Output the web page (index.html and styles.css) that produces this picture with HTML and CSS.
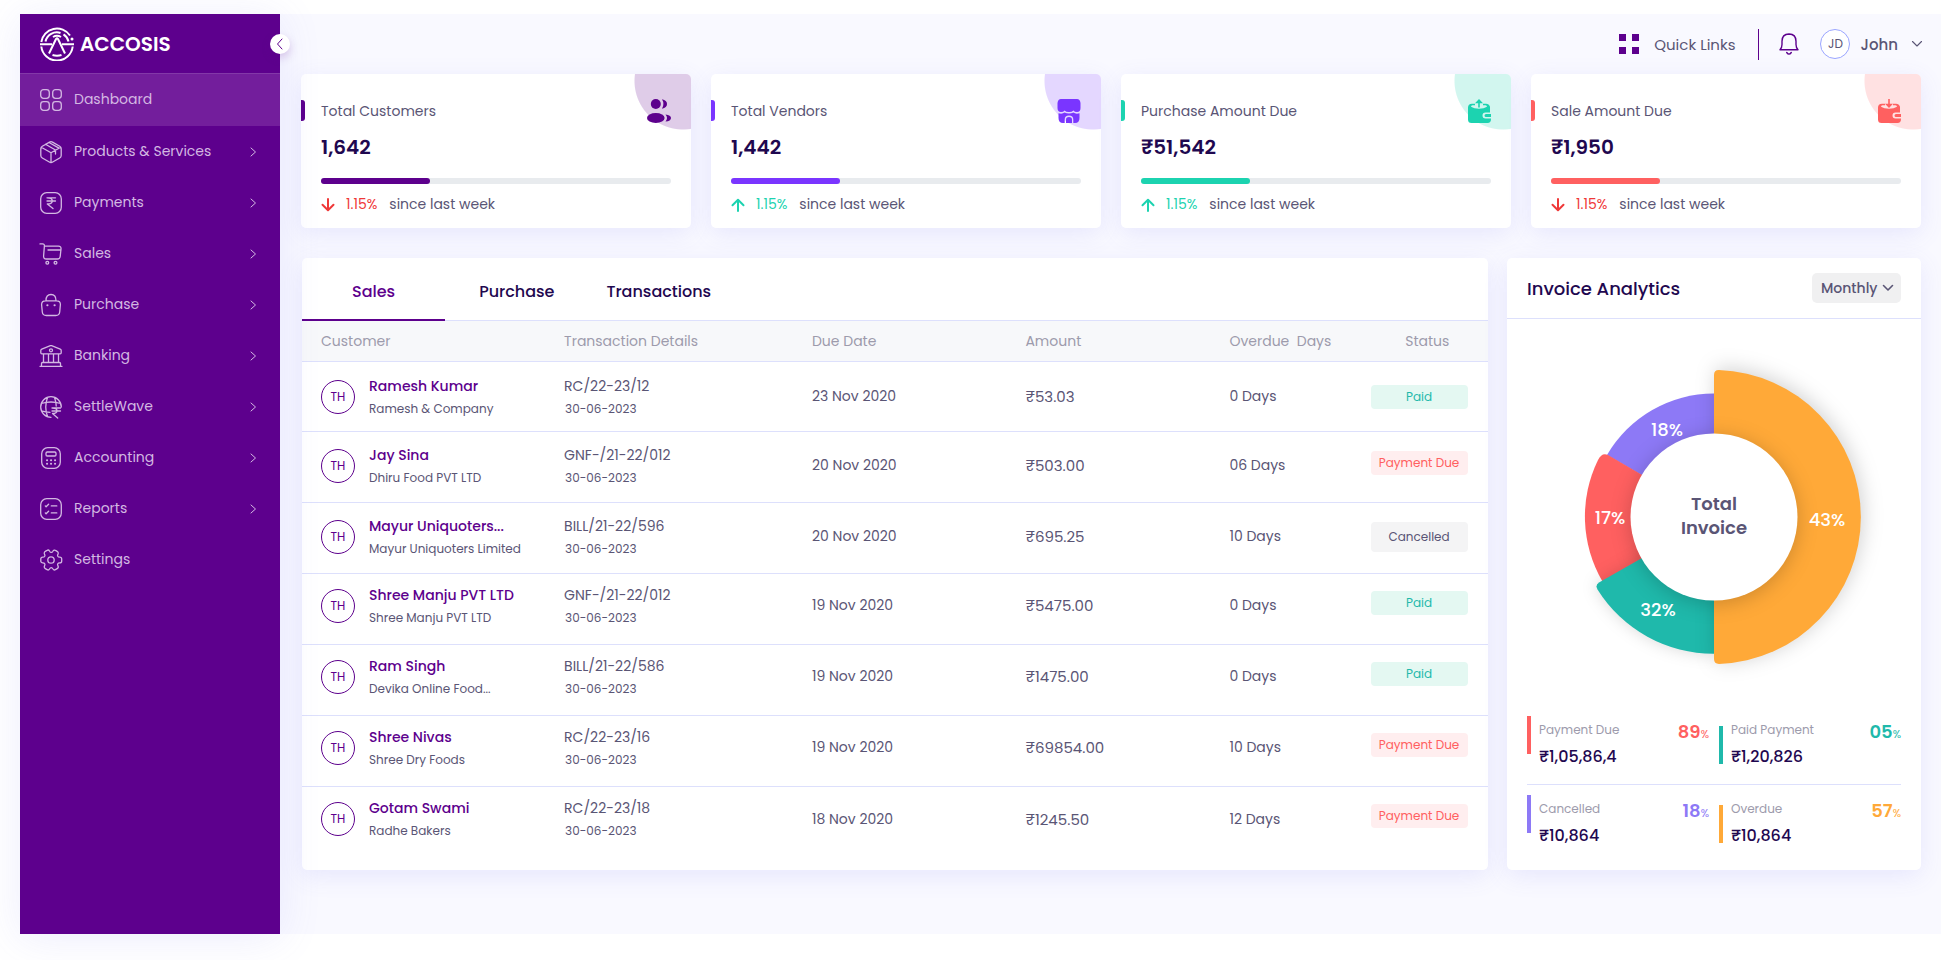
FILE: index.html
```html
<!DOCTYPE html>
<html lang="en">
<head>
<meta charset="utf-8">
<meta name="viewport" content="width=device-width, initial-scale=1">
<title>Accosis Dashboard</title>
<link rel="stylesheet" href="styles.css">
</head>
<body>
<svg class="sprite" aria-hidden="true">
  <symbol id="chevron-right" viewBox="0 0 10 12"><path d="M3 2l4.500 4L3 10"/></symbol>
  <symbol id="arrow-down" viewBox="0 0 14 14"><path d="M7 1v11M1.500 6.800L7 12.200l5.500-5.400"/></symbol>
  <symbol id="arrow-up" viewBox="0 0 14 14"><path d="M7 13V2M1.500 7.200L7 1.800l5.500 5.400"/></symbol>
</svg>
<div class="page">
  <aside class="sidebar">
    <div class="brand">
      <svg class="brand-mark" viewBox="0 0 34 34" aria-hidden="true">
        <path d="M1.300 15A15.800 15.800 0 0 1 30 8.500M1.300 19.500a15.800 15.800 0 0 0 31.400 0" />
        <path d="M0 17.300h12M22 17.300h12" />
        <path d="M5.500 14.500A11.600 11.600 0 0 1 20.500 6M23.500 7.300a11.600 11.600 0 0 1 5 7.200" />
        <path d="M9 26.500L16 12q1-1.600 2 0l7 14.500" />
        <path d="M12.500 28q4.500 1.500 9 0M13 10q4-2.500 8 0" />
        <circle class="dot" cx="32" cy="12" r="1.500"/>
      </svg>
      <span class="brand-name">ACCOSIS</span>
      <button class="collapse" type="button" aria-label="Collapse menu"><svg viewBox="0 0 10 14"><path d="M7 2L2.500 7 7 12"/></svg></button>
    </div>
    <nav class="nav">
      <a class="nav-item active" href="#"><svg class="ico" viewBox="0 0 24 24"><rect x="1.700" y="1.700" width="8.600" height="8.600" rx="2.800"/><rect x="13.700" y="1.700" width="8.600" height="8.600" rx="2.800"/><rect x="1.700" y="13.700" width="8.600" height="8.600" rx="2.800"/><rect x="13.700" y="13.700" width="8.600" height="8.600" rx="2.800"/></svg><span>Dashboard</span></a>
      <a class="nav-item" href="#"><svg class="ico" viewBox="0 0 24 24"><path d="M10.500 2.100L3.300 6.200Q1.800 7.100 1.800 8.800v6.600q0 1.700 1.500 2.600l7 4q1.700 1 3.400 0l7-4q1.500-.9 1.500-2.600V8.800q0-1.700-1.500-2.600l-7.200-4.100q-1.500-.8-3 0zM2.300 7.200L12 12.700l9.700-5.500M12 12.700v9.600M6.500 4.300l10 5.700v4M10 2.500l10 5.600"/></svg><span>Products &amp; Services</span><svg class="chev"><use href="#chevron-right"/></svg></a>
      <a class="nav-item" href="#"><svg class="ico" viewBox="0 0 24 24"><rect x="1.700" y="1.700" width="20.600" height="20.600" rx="6"/><path d="M8 6.800h8.500M8 10h8.500M8.300 6.800q5 0 5 3.100 0 3-5 3l5.700 4.600"/></svg><span>Payments</span><svg class="chev"><use href="#chevron-right"/></svg></a>
      <a class="nav-item" href="#"><svg class="ico" viewBox="0 0 24 24"><path d="M1 1.900h2.500q2 0 1.900 2L4.600 14q-.2 3 2.700 3h11.200q2.400 0 2.700-2.500l.8-7.500q.3-2.900-2.600-2.900H5.500M9 8h13"/><circle cx="8.300" cy="20.800" r="1.400"/><circle cx="16.500" cy="20.800" r="1.400"/></svg><span>Sales</span><svg class="chev"><use href="#chevron-right"/></svg></a>
      <a class="nav-item" href="#"><svg class="ico" viewBox="0 0 24 24"><path d="M7 7.500q0-6 5-6t5 6M6.500 7.800h11q4 0 3.900 3.700l-.7 7.500q-.3 3.500-4 3.500H7.300q-3.700 0-4-3.500l-.7-7.500q0-3.700 3.900-3.700z"/><path d="M8.300 12.300h.2M15.500 12.300h.2" class="thick"/></svg><span>Purchase</span><svg class="chev"><use href="#chevron-right"/></svg></a>
      <a class="nav-item" href="#"><svg class="ico" viewBox="0 0 24 24"><path d="M12.600 1.700l8.600 3.400q1 .4 1 1.400v2.300q0 1-1 1H2.800q-1 0-1-1V6.500q0-1 1-1.400l8.600-3.400q.6-.2 1.200 0zM2.500 22v-2.500q0-1 1-1h17q1 0 1 1V22M1 22.300h22M4.500 18.200V10M9.500 18.200V10M14.500 18.200V10M19.500 18.200V10"/><circle cx="12" cy="6.300" r="1.500"/></svg><span>Banking</span><svg class="chev"><use href="#chevron-right"/></svg></a>
      <a class="nav-item" href="#"><svg class="ico" viewBox="0 0 24 24"><path d="M12 22.300A10.300 10.300 0 1 1 22.300 12M8.500 2.500q-3.500 9.500 0 19M15.500 2.500q1.700 4.500 1.700 8.500M2.400 8.500q9.600-3 19.200 0M2.500 15.800q4 1.300 8.500 1.500M13 13h8.500M13 16h8.500M13.500 13q4.500 0 4.500 2.700t-4.500 2.700l5.200 4.600"/></svg><span>SettleWave</span><svg class="chev"><use href="#chevron-right"/></svg></a>
      <a class="nav-item" href="#"><svg class="ico" viewBox="0 0 24 24"><rect x="2.700" y="1.700" width="18.600" height="20.600" rx="6"/><rect x="7" y="6" width="10" height="4" rx="1.200"/><path class="thick" d="M8 14.300h.1M12 14.300h.1M16 14.300h.1M8 17.800h.1M12 17.800h.1M16 17.800h.1"/></svg><span>Accounting</span><svg class="chev"><use href="#chevron-right"/></svg></a>
      <a class="nav-item" href="#"><svg class="ico" viewBox="0 0 24 24"><rect x="1.700" y="1.700" width="20.600" height="20.600" rx="6"/><path d="M12.300 8.900h5.500M12.300 15.900h5.500M6.300 8.900l.8.800 2.500-2.400M6.300 15.900l.8.800 2.500-2.400"/></svg><span>Reports</span><svg class="chev"><use href="#chevron-right"/></svg></a>
      <a class="nav-item" href="#"><svg class="ico" viewBox="0 0 24 24"><circle cx="12" cy="12" r="3.200"/><path d="M1.800 12.900v-1.800c0-1.100.9-2 2-2 1.900 0 2.700-1.400 1.700-3-.5-1-.2-2.200.8-2.700l1.800-1c.8-.5 1.900-.2 2.400.6l.1.200c.9 1.600 2.400 1.600 3.300 0l.1-.2c.5-.8 1.600-1.100 2.400-.6l1.800 1c1 .5 1.300 1.700.8 2.700-1 1.600-.2 3 1.700 3 1.100 0 2 .9 2 2v1.800c0 1.100-.9 2-2 2-1.900 0-2.700 1.400-1.700 3 .5 1 .2 2.200-.8 2.700l-1.800 1c-.8.500-1.900.2-2.400-.6l-.1-.2c-.9-1.600-2.400-1.600-3.300 0l-.1.200c-.5.800-1.600 1.100-2.400.6l-1.800-1c-1-.5-1.300-1.700-.8-2.700 1-1.600.2-3-1.700-3-1.100 0-2-.9-2-2z"/></svg><span>Settings</span></a>
    </nav>
  </aside>

  <main class="main">
    <header class="topbar">
      <a class="quick" href="#"><svg viewBox="0 0 20 20"><path d="M0 0h7v7H0zM13 0h7v7h-7zM0 13h7v7H0zM13 13h7v7h-7z"/></svg>Quick Links</a>
      <span class="rule"></span>
      <button class="bell" type="button" aria-label="Notifications"><svg viewBox="0 0 20 22"><path d="M1 16.700h18q-2-2-2-5.200V8.300q0-7.200-7-7.300-7 .1-7 7.300v3.200q0 3.200-2 5.200zM7.700 19.500q2.300 3.200 4.600 0"/></svg></button>
      <button class="user" type="button"><span class="user-badge">JD</span><span class="user-name">John</span><svg viewBox="0 0 12 8"><path d="M1.500 1.500L6 6l4.500-4.500"/></svg></button>
    </header>

    <section class="cards">
      <article class="card purple">
        <span class="blob"></span>
        <svg class="card-ico" viewBox="0 0 24 24"><circle cx="8.800" cy="5" r="5"/><path d="M15 .3q5 .9 5 4.700t-5 4.700q2.800-4.700 0-9.400zM18.500 15.500q5.500.5 5.500 3.500t-5.500 3.600q3-3.600 0-7.100z"/><ellipse cx="8.800" cy="19" rx="8.800" ry="5"/></svg>
        <h2>Total Customers</h2><p class="figure">1,642</p>
        <div class="track"><div class="fill" style="width:31%"></div></div>
        <p class="change down"><svg><use href="#arrow-down"/></svg><b>1.15%</b><span>since last week</span></p>
      </article>
      <article class="card violet">
        <span class="blob"></span>
        <svg class="card-ico" viewBox="0 0 24 24"><path d="M4 0h16q3 0 3.500 4v5q0 4-3.500 4-2.500 0-3.500-1.500Q15 13 12 13t-4.500-1.500Q6.500 13 4 13 .5 13 .5 9V4Q1 0 4 0z"/><path d="M1.500 14.300q4 1 6-.8 4.500 2 9 0 2 1.800 6 .8V19q0 5-4.500 5h-1.700v-3.500q0-4-4.300-4t-4.300 4V24H6q-4.500 0-4.500-5z"/><path d="M9 24v-3.300q0-2.700 3-2.700t3 2.700V24z"/></svg>
        <h2>Total Vendors</h2><p class="figure">1,442</p>
        <div class="track"><div class="fill" style="width:31%"></div></div>
        <p class="change up"><svg><use href="#arrow-up"/></svg><b>1.15%</b><span>since last week</span></p>
      </article>
      <article class="card green">
        <span class="blob"></span>
        <svg class="card-ico" viewBox="0 0 24 24"><path d="M1 8.500q0-3.800 4-3.800h3v1.600H5.500q-1.500 0-1.500 1.500 3 2 8 2t8-2q0-1.500-1.500-1.500H16V4.700h3q3 0 4 3v5.800h-4.500a3 3 0 0 0 0 6H24V20q0 4-3.500 4H4.500Q1 24 1 20.500z"/><path d="M19 15h5v3h-5a1.500 1.500 0 0 1 0-3zM11.200 8.500V4.200H8L12 0l4 4.200h-3.200v4.300z"/></svg>
        <h2>Purchase Amount Due</h2><p class="figure">₹51,542</p>
        <div class="track"><div class="fill" style="width:31%"></div></div>
        <p class="change up"><svg><use href="#arrow-up"/></svg><b>1.15%</b><span>since last week</span></p>
      </article>
      <article class="card red">
        <span class="blob"></span>
        <svg class="card-ico" viewBox="0 0 24 24"><path d="M1 8.500q0-3.800 4-3.800h3v1.600H5.500q-1.500 0-1.500 1.500 3 2 8 2t8-2q0-1.500-1.500-1.500H16V4.700h3q3 0 4 3v5.800h-4.500a3 3 0 0 0 0 6H24V20q0 4-3.500 4H4.500Q1 24 1 20.500z"/><path d="M19 15h5v3h-5a1.500 1.500 0 0 1 0-3zM11.200 0v4.700H8L12 9l4-4.300h-3.200V0z"/></svg>
        <h2>Sale Amount Due</h2><p class="figure">₹1,950</p>
        <div class="track"><div class="fill" style="width:31%"></div></div>
        <p class="change down"><svg><use href="#arrow-down"/></svg><b>1.15%</b><span>since last week</span></p>
      </article>
    </section>

    <section class="panels">
      <div class="panel">
        <div class="tabs" role="tablist">
          <button class="tab selected" type="button" role="tab" aria-selected="true">Sales</button>
          <button class="tab" type="button" role="tab" aria-selected="false">Purchase</button>
          <button class="tab" type="button" role="tab" aria-selected="false">Transactions</button>
        </div>
        <table class="ledger">
          <colgroup><col class="c-customer"><col class="c-details"><col class="c-date"><col class="c-amount"><col class="c-days"><col class="c-status"></colgroup>
          <thead><tr><th>Customer</th><th>Transaction Details</th><th>Due Date</th><th>Amount</th><th>Overdue&nbsp; Days</th><th class="status-head">Status</th></tr></thead>
          <tbody>
            <tr><td><div class="who"><span class="avatar">TH</span><div><a href="#">Ramesh Kumar</a><small>Ramesh &amp; Company</small></div></div></td><td><div class="doc">RC/22-23/12<small>30-06-2023</small></div></td><td>23 Nov 2020</td><td class="amount">₹53.03</td><td>0 Days</td><td><span class="pill paid">Paid</span></td></tr>
            <tr><td><div class="who"><span class="avatar">TH</span><div><a href="#">Jay Sina</a><small>Dhiru Food PVT LTD</small></div></div></td><td><div class="doc">GNF-/21-22/012<small>30-06-2023</small></div></td><td>20 Nov 2020</td><td class="amount">₹503.00</td><td>06 Days</td><td><span class="pill due">Payment Due</span></td></tr>
            <tr><td><div class="who"><span class="avatar">TH</span><div><a href="#">Mayur Uniquoters...</a><small>Mayur Uniquoters Limited</small></div></div></td><td><div class="doc">BILL/21-22/596<small>30-06-2023</small></div></td><td>20 Nov 2020</td><td class="amount">₹695.25</td><td>10 Days</td><td><span class="pill cancelled">Cancelled</span></td></tr>
            <tr><td><div class="who"><span class="avatar">TH</span><div><a href="#">Shree Manju PVT LTD</a><small>Shree Manju PVT LTD</small></div></div></td><td><div class="doc">GNF-/21-22/012<small>30-06-2023</small></div></td><td>19 Nov 2020</td><td class="amount">₹5475.00</td><td>0 Days</td><td><span class="pill paid">Paid</span></td></tr>
            <tr><td><div class="who"><span class="avatar">TH</span><div><a href="#">Ram Singh</a><small>Devika Online Food...</small></div></div></td><td><div class="doc">BILL/21-22/586<small>30-06-2023</small></div></td><td>19 Nov 2020</td><td class="amount">₹1475.00</td><td>0 Days</td><td><span class="pill paid">Paid</span></td></tr>
            <tr><td><div class="who"><span class="avatar">TH</span><div><a href="#">Shree Nivas</a><small>Shree Dry Foods</small></div></div></td><td><div class="doc">RC/22-23/16<small>30-06-2023</small></div></td><td>19 Nov 2020</td><td class="amount">₹69854.00</td><td>10 Days</td><td><span class="pill due">Payment Due</span></td></tr>
            <tr><td><div class="who"><span class="avatar">TH</span><div><a href="#">Gotam Swami</a><small>Radhe Bakers</small></div></div></td><td><div class="doc">RC/22-23/18<small>30-06-2023</small></div></td><td>18 Nov 2020</td><td class="amount">₹1245.50</td><td>12 Days</td><td><span class="pill due">Payment Due</span></td></tr>
          </tbody>
        </table>
      </div>

      <div class="panel analytics">
        <div class="panel-head">
          <h2>Invoice Analytics</h2>
          <div class="period"><select aria-label="Period"><option>Monthly</option><option>Weekly</option><option>Yearly</option></select><svg viewBox="0 0 12 8"><path d="M1.500 1.500L6 6l4.500-4.500"/></svg></div>
        </div>
        <svg class="donut" viewBox="0 0 320 320" role="img" aria-label="Total Invoice">
          <path class="s-purple" d="M160 160V36.500A123.500 123.500 0 0 0 53 98z"/>
          <path class="s-red" d="M160 160L54 98Q48 95 44 103A128.700 128.700 0 0 0 48.500 224.500z"/>
          <path class="s-teal" d="M160 160L45 225.500Q41 228 43.500 232.500A136.700 136.700 0 0 0 160 296.700z"/>
          <path class="s-orange" d="M160 160V18q0-5 5-4.910A147 147 0 0 1 165 306.910q-5 0-5-4.910z"/>
          <circle class="hole" cx="160" cy="160" r="83.500"/>
          <g class="share"><text x="113" y="79">18%</text><text x="56" y="167">17%</text><text x="273" y="169">43%</text><text x="104" y="259">32%</text></g>
          <g class="centre"><text x="160" y="153">Total</text><text x="160" y="177">Invoice</text></g>
        </svg>
        <div class="stats">
          <div class="stat t-red"><div class="label">Payment Due<strong>₹1,05,86,4</strong></div><span class="pct">89<i>%</i></span></div>
          <div class="stat t-teal low"><div class="label">Paid Payment<strong>₹1,20,826</strong></div><span class="pct">05<i>%</i></span></div>
          <div class="stat t-purple"><div class="label">Cancelled<strong>₹10,864</strong></div><span class="pct">18<i>%</i></span></div>
          <div class="stat t-orange low"><div class="label">Overdue<strong>₹10,864</strong></div><span class="pct">57<i>%</i></span></div>
        </div>
      </div>
    </section>
  </main>
</div>
</body>
</html>
```
FILE: styles.css
```css
:root {
  --brand: #5d008d;
  --ink: #1f0850;
  --text: #5a5575;
  --muted: #9d9bac;
  --line: #dde0fc;
  --red: #ff6060;
  --teal: #1fb9ab;
  --violet: #8d79f6;
  --orange: #ffa938;
}
* { box-sizing: border-box; }
body { margin: 0; background: #fff; color: var(--text); font-family: Poppins, Inter, "Noto Sans", sans-serif; font-size: 14px; }
h2, p { margin: 0; }
a { color: inherit; text-decoration: none; }
button { border: 0; padding: 0; background: none; font: inherit; color: inherit; cursor: pointer; }
svg { fill: none; stroke: currentColor; stroke-linecap: round; stroke-linejoin: round; flex: none; }
.sprite { display: none; }

.page { display: flex; min-height: 100vh; padding: 14px 0 26px 20px; }

/* Sidebar */
.sidebar { position: relative; z-index: 1; flex: 0 0 260px; background: var(--brand); box-shadow: 0 4px 40px rgba(108, 108, 240, .12); }
.brand { position: relative; display: flex; align-items: center; gap: 6px; height: 59px; padding-left: 20px; color: #fff; }
.brand-mark { width: 34px; height: 34px; stroke-width: 2; stroke-linecap: butt; }
.brand-mark .dot { fill: #fff; stroke: none; }
.brand-name { font-size: 20px; font-weight: 600; }
.collapse { position: absolute; right: -10px; top: 20px; display: grid; place-items: center; width: 20px; height: 20px; border-radius: 50%; background: #fff; color: var(--brand); box-shadow: 0 4px 10px rgba(93, 0, 141, .2); }
.collapse svg { width: 10px; height: 14px; stroke-width: 1; }
.nav-item { display: flex; align-items: center; gap: 11px; height: 51px; padding: 0 22px 0 19px; color: #d3b8e2; font-weight: 400; }
.nav-item.active { height: 53px; padding-bottom: 1px; background: #731e9c; border-top: 1px solid #8338a8; }
.ico { width: 24px; height: 24px; stroke-width: 1.3; }
.ico .thick { stroke-width: 2; }
.chev { width: 10px; height: 12px; margin-left: auto; stroke-width: 1; }

/* Main area */
.main { flex: 1; min-width: 0; padding: 0 20px 0 21px; background: #f9f9ff; }
.topbar { display: flex; align-items: center; justify-content: flex-end; height: 60px; margin-right: -2px; }
.quick { display: flex; align-items: center; gap: 15px; font-size: 15px; }
.quick svg { width: 20px; height: 20px; fill: var(--brand); stroke: none; }
.rule { width: 1px; height: 31px; margin: 0 20px 0 23px; background: var(--brand); }
.bell { display: grid; color: var(--brand); }
.bell svg { width: 20px; height: 22px; stroke-width: 1.4; }
.user { display: flex; align-items: center; margin-left: 21px; }
.user-badge { display: grid; place-items: center; width: 30px; height: 30px; border: 1px solid #9aa5ff; border-radius: 50%; background: #fff; font-size: 12px; }
.user-name { margin: 0 13px 0 10px; font-size: 15px; font-weight: 500; }
.user svg { width: 12px; height: 8px; stroke-width: 1.1; }

/* Summary cards */
.cards { display: grid; grid-template-columns: repeat(4, 1fr); gap: 20px; }
.card, .panel { background: #fff; border-radius: 5px; box-shadow: 0 6px 24px rgba(100, 100, 235, .12); }
.card { position: relative; padding: 26px 20px 12px; }
.card { --tone: var(--brand); --tint: #dfcce8; }
.card.violet { --tone: #7a35ff; --tint: #e4d7ff; }
.card.green { --tone: #1cd3b0; --tint: #d2f6ef; }
.card.red { --tone: #ff6060; --tint: #ffe1e2; }
.card::before { content: ""; position: absolute; left: 0; top: 26px; width: 4px; height: 21px; border-radius: 0 3px 3px 0; background: var(--tone); }
.blob { position: absolute; right: 0; top: 0; width: 57px; height: 56px; border-radius: 0 5px 0 0; background: radial-gradient(circle at 49px 7px, var(--tint) 48px, transparent 49px); }
.card-ico { position: absolute; right: 20px; top: 25px; width: 24px; height: 24px; fill: var(--tone); stroke: none; }
.card h2 { font-size: 14px; line-height: 22px; font-weight: 400; }
.figure { margin-top: 10px; color: var(--ink); font-size: 20px; line-height: 30px; font-weight: 600; }
.track { height: 6px; margin-top: 16px; border-radius: 3px; background: #e8ebee; }
.fill { height: 6px; border-radius: 3px; background: var(--tone); }
.change { display: flex; align-items: center; margin-top: 9px; line-height: 23px; }
.change svg { width: 14px; height: 14px; margin-right: 11px; stroke-width: 2; }
.change b { margin-right: 12px; font-weight: 400; }
.down svg, .down b { color: #ef3838; }
.up svg, .up b { color: #1cd3b0; }

/* Panels */
.panels { display: grid; grid-template-columns: 1186fr 414fr; gap: 19px; margin: 30px 0 64px; padding-left: 1px; }
.tabs { display: flex; height: 63px; border-bottom: 1px solid var(--line); }
.tab { height: 63px; padding: 5px 26px 0; border-bottom: 2px solid transparent; color: var(--ink); font-size: 16px; font-weight: 500; }
.tab.selected { margin-right: 8px; padding-inline: 50px; border-color: var(--brand); color: var(--brand); }
.ledger { width: 100%; border-collapse: separate; border-spacing: 0; table-layout: fixed; }
.c-customer { width: 22.100%; }
.c-details { width: 20.900%; }
.c-date { width: 18%; }
.c-amount { width: 17.200%; }
.c-days { width: 11.900%; }
.c-status { width: 9.900%; }
.ledger th { height: 41px; padding: 0; border-bottom: 1px solid var(--line); background: #f7f8fa; color: var(--muted); font-weight: 400; text-align: left; }
.ledger td { height: 71px; padding: 0 0 7px; border-bottom: 1px solid var(--line); }
.ledger tr:first-child td { height: 70px; padding-bottom: 0; }
.ledger tr:nth-child(2) td, .ledger tr:nth-child(3) td { padding-bottom: 3px; }
.ledger tr:last-child td { border-bottom: 0; }
.ledger th:first-child, .ledger td:first-child { padding-left: 19px; }
.ledger .status-head { padding-right: 4px; text-align: center; }
.ledger .amount { font-size: 15px; }
.who { display: flex; align-items: center; gap: 14px; }
.avatar { display: grid; place-items: center; width: 34px; height: 34px; border: 1px solid var(--brand); border-radius: 50%; color: var(--brand); font-size: 12px; }
.who a { display: block; color: var(--brand); font-weight: 500; line-height: 24px; }
.ledger small { display: block; font-size: 12px; line-height: 22px; }
.doc { line-height: 24px; }
.doc small { padding-left: 1px; }
.pill { display: grid; place-items: center; width: 97px; height: 24px; margin-bottom: 6px; border-radius: 4px; font-size: 12px; }
.ledger tr:first-child .pill { margin-bottom: 0; }
.paid { background: #e4f8f2; color: var(--teal); }
.due { background: #ffeeef; color: var(--red); }
.cancelled { height: 30px; margin-bottom: 0; background: #f4f4f5; }

/* Invoice analytics */
.analytics { display: flex; flex-direction: column; }
.panel-head { display: flex; align-items: center; justify-content: space-between; height: 61px; padding: 0 20px; border-bottom: 1px solid var(--line); }
.panel-head h2 { color: var(--ink); font-size: 18px; font-weight: 500; }
.period { position: relative; color: var(--text); }
.period select { appearance: none; display: block; width: 89px; height: 30px; padding: 0 0 0 9px; border: 0; border-radius: 5px; background: #f0f0f1; color: inherit; font: 500 14px Poppins, Inter, sans-serif; }
.period svg { position: absolute; right: 7px; top: 11px; width: 12px; height: 8px; stroke-width: 1.6; pointer-events: none; }
.donut { width: 320px; height: 320px; margin: 38px auto 39px; overflow: visible; stroke: none; }
.s-purple { fill: var(--violet); }
.s-red { fill: var(--red); }
.s-teal { fill: var(--teal); filter: drop-shadow(0 0 8px rgba(0, 0, 0, .15)); }
.s-orange { fill: var(--orange); filter: drop-shadow(2px -2px 10px rgba(0, 0, 0, .18)); }
.hole { fill: #fff; filter: drop-shadow(0 3px 10px rgba(0, 0, 0, .2)); }
.donut text { text-anchor: middle; font-size: 18px; }
.share { fill: #fff; font-weight: 500; }
.centre { fill: var(--text); font-weight: 600; }
.stats { display: grid; grid-template: 79px 75px / 1fr 1fr; column-gap: 10px; margin: 0 20px; background: linear-gradient(var(--line), var(--line)) 0 68px / 100% 1px no-repeat; }
.stat { --tone: var(--red); display: flex; align-items: flex-start; }
.stat::before { content: ""; width: 4px; height: 38px; margin-right: 8px; background: var(--tone); }
.stat.low::before { margin-top: 10px; }
.t-teal { --tone: var(--teal); }
.t-purple { --tone: var(--violet); }
.t-orange { --tone: var(--orange); }
.label { flex: 1; padding-top: 3px; color: var(--muted); font-size: 12px; line-height: 22px; }
.label strong { display: block; margin-top: 4px; color: var(--ink); font-size: 16px; line-height: 24px; font-weight: 500; }
.pct { padding-top: 4px; color: var(--tone); font-size: 18px; line-height: 24px; font-weight: 600; }
.pct i { font-size: 11px; font-style: normal; font-weight: 400; }
```
